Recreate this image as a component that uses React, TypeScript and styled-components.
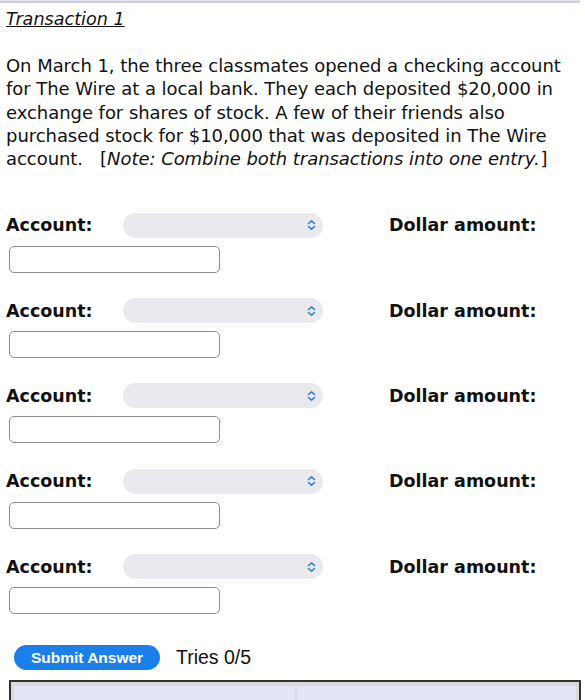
import styled, { createGlobalStyle } from "styled-components";

const GlobalStyle = createGlobalStyle`
  html, body {
    margin: 0;
    padding: 0;
    background: #ffffff;
  }
  body {
    font-family: "DejaVu Sans", Verdana, sans-serif;
    color: #111;
  }
`;

const Page = styled.div`
  width: 585px;
  height: 700px;
  overflow: hidden;
  display: flex;
  flex-direction: column;
`;

const TopBand = styled.div`
  width: 580px;
  height: 3px;
  background: #e4e4f7;
  border-bottom: 2px solid #cfcfd9;
`;

const Content = styled.div`
  padding: 0 6px;
  display: flex;
  flex-direction: column;
`;

const Heading = styled.div`
  font-style: italic;
  text-decoration: underline;
  font-size: 17.6px;
  line-height: 23px;
  margin-top: 5px;
`;

const Paragraph = styled.p`
  font-size: 18px;
  line-height: 23.1px;
  margin: 23px 0 0;
  width: 572px;
  letter-spacing: -0.05px;

  em {
    font-style: italic;
    margin-right: 1px;
  }
`;

const Entries = styled.div`
  display: flex;
  flex-direction: column;
  gap: 25.3px;
  margin-top: 43px;
`;

const Entry = styled.div`
  display: flex;
  flex-direction: column;
  gap: 8px;
`;

const LabelRow = styled.div`
  display: flex;
  align-items: center;
  height: 25px;
`;

const Label = styled.span<{ $width?: number }>`
  font-weight: bold;
  font-size: 17.5px;
  width: ${(p) => (p.$width ? `${p.$width}px` : "auto")};
`;

const Select = styled.div`
  width: 200px;
  height: 25px;
  border-radius: 12.5px;
  background: #e9e9ee;
  display: flex;
  align-items: center;
  justify-content: flex-end;
  padding-right: 6px;
  box-sizing: border-box;
  margin-right: 66px;
`;

const AmountInput = styled.div`
  width: 211px;
  height: 27px;
  margin-left: 3px;
  border: 1.5px solid #8e8e8e;
  border-radius: 5px;
  box-sizing: border-box;
  background: #fff;
`;

const Actions = styled.div`
  display: flex;
  align-items: center;
  gap: 16px;
  margin-top: 31px;
  padding-left: 14px;
`;

const SubmitButton = styled.button`
  font-family: "Liberation Sans", Arial, sans-serif;
  font-weight: bold;
  font-size: 15.5px;
  color: #fff;
  background: #1a7fe9;
  border: none;
  border-radius: 13px;
  height: 25px;
  width: 146px;
  padding: 0;
`;

const Tries = styled.span`
  font-family: "Liberation Sans", Arial, sans-serif;
  font-size: 19.5px;
  color: #111;
`;

const Table = styled.div`
  margin: 10px 4px 0 9px;
  border: 2px solid #333;
  border-bottom: none;
  padding: 4px 3px 0;
  background: #d9d9d9;
  display: grid;
  grid-template-columns: 281px 1fr;
  gap: 2px;
  height: 30px;
`;

const Cell = styled.div`
  background: #e4e4f8;
`;

function Chevrons() {
  return (
    <svg width="11" height="12" viewBox="0 0 11 12">
      <path
        d="M2.5 4.5 L5.5 1.8 L8.5 4.5 M2.5 7.5 L5.5 10.2 L8.5 7.5"
        fill="none"
        stroke="#2f7fd6"
        strokeWidth="1.6"
        strokeLinecap="round"
        strokeLinejoin="round"
      />
    </svg>
  );
}

const rows = [1, 2, 3, 4, 5];

export default function App() {
  return (
    <>
      <GlobalStyle />
      <Page>
        <TopBand />
        <Content>
          <Heading>Transaction 1</Heading>
          <Paragraph>
            On March 1, the three classmates opened a checking account for The
            Wire at a local bank. They each deposited $20,000 in exchange for
            shares of stock. A few of their friends also purchased stock for
            $10,000 that was deposited in The Wire account.&nbsp;&nbsp; [
            <em>Note: Combine both transactions into one entry.</em>]
          </Paragraph>
          <Entries>
            {rows.map((r) => (
              <Entry key={r}>
                <LabelRow>
                  <Label $width={117}>Account:</Label>
                  <Select>
                    <Chevrons />
                  </Select>
                  <Label>Dollar amount:</Label>
                </LabelRow>
                <AmountInput />
              </Entry>
            ))}
          </Entries>
        </Content>
        <Actions>
          <SubmitButton>Submit Answer</SubmitButton>
          <Tries>Tries 0/5</Tries>
        </Actions>
        <Table>
          <Cell />
          <Cell />
        </Table>
      </Page>
    </>
  );
}
